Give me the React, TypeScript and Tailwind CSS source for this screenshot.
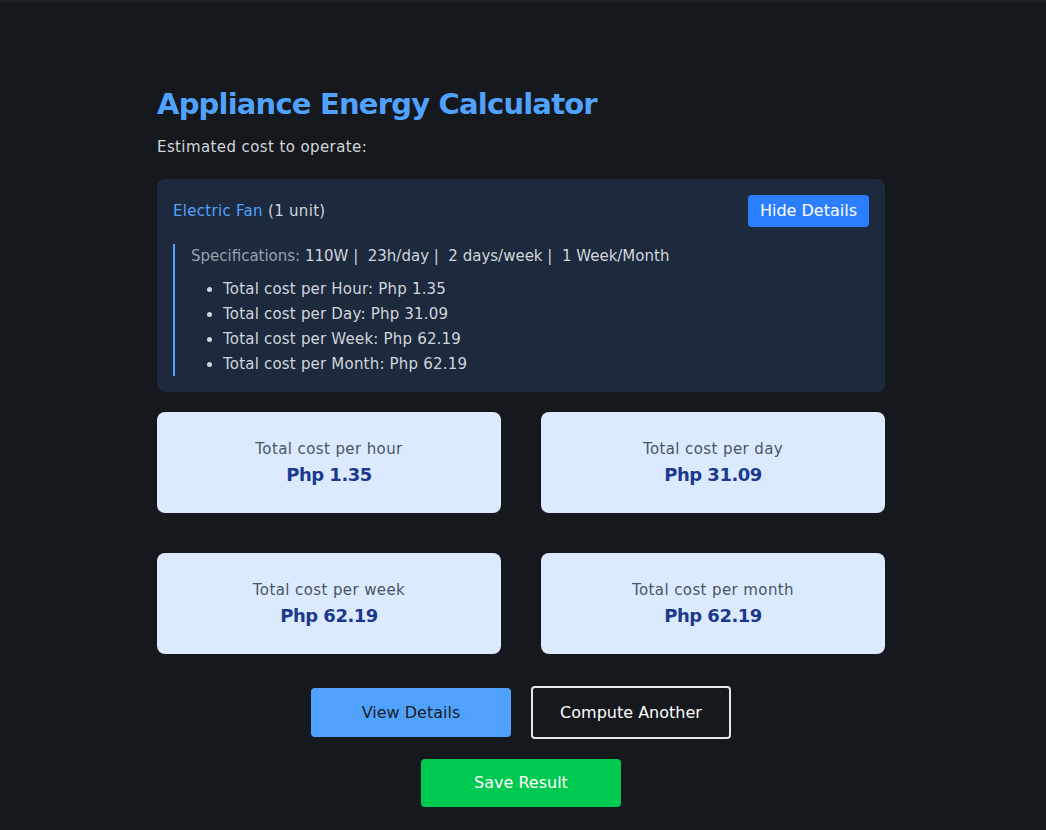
import React from "react";

const font = { fontFamily: '"DejaVu Sans", "Noto Sans", sans-serif' };

function CostCard({ label, value }: { label: string; value: string }) {
  return (
    <div className="h-[101px] rounded-lg bg-[#dbeafe] flex flex-col items-center justify-center">
      <div className="text-[15px] leading-6 tracking-[0.4px] text-[#4a5565]">{label}</div>
      <div className="text-[18px] leading-7 font-bold tracking-[-0.5px] text-[#1c398e]">{value}</div>
    </div>
  );
}

export default function App() {
  return (
    <div className="min-h-screen bg-[#15181d] border-t-2 border-[#1d2026]" style={font}>
      <div className="w-[728px] ml-[157px] pt-[84px] pb-[23px]">
        <h1 className="text-[29px] leading-9 font-bold tracking-[-0.8px] text-[#51a2ff]">Appliance Energy Calculator</h1>
        <p className="mt-[13px] text-[15px] leading-6 tracking-[0.4px] text-[#d1d5db]">Estimated cost to operate:</p>

        <div className="mt-5 rounded-lg bg-[#1d293d] p-4">
          <div className="flex items-center justify-between">
            <div className="text-[15px] leading-6 tracking-[0.3px]">
              <span className="text-[#51a2ff]">Electric Fan</span>{" "}
              <span className="text-[#d1d5db]">(1 unit)</span>
            </div>
            <button className="h-8 px-3 rounded bg-[#2b7fff] text-white text-[16px]">Hide Details</button>
          </div>
          <div className="mt-[17px] border-l-2 border-[#51a2ff] pl-4">
            <div className="text-[15px] leading-6 text-[#d1d5db]">
              <span className="text-[#99a1af]">Specifications:</span> 110W |&nbsp; 23h/day |&nbsp; 2 days/week |&nbsp; 1 Week/Month
            </div>
            <ul className="mt-[9px] list-disc pl-8 text-[15px] leading-6 tracking-[0.2px] text-[#d1d5db] flex flex-col gap-px">
              <li>Total cost per Hour: Php 1.35</li>
              <li>Total cost per Day: Php 31.09</li>
              <li>Total cost per Week: Php 62.19</li>
              <li>Total cost per Month: Php 62.19</li>
            </ul>
          </div>
        </div>

        <div className="mt-5 grid grid-cols-2 gap-10">
          <CostCard label="Total cost per hour" value="Php 1.35" />
          <CostCard label="Total cost per day" value="Php 31.09" />
          <CostCard label="Total cost per week" value="Php 62.19" />
          <CostCard label="Total cost per month" value="Php 62.19" />
        </div>

        <div className="mt-8 flex items-center justify-center gap-5">
          <button className="w-[200px] h-[49px] rounded bg-[#51a2ff] text-[#1a1d23] text-[16px]">View Details</button>
          <button className="w-[200px] h-[53px] rounded border-2 border-[#e5e7eb] text-white text-[16px]">Compute Another</button>
        </div>
        <div className="mt-5 flex justify-center">
          <button className="w-[200px] h-[48px] rounded bg-[#00c950] text-white text-[16px]">Save Result</button>
        </div>
      </div>
    </div>
  );
}
